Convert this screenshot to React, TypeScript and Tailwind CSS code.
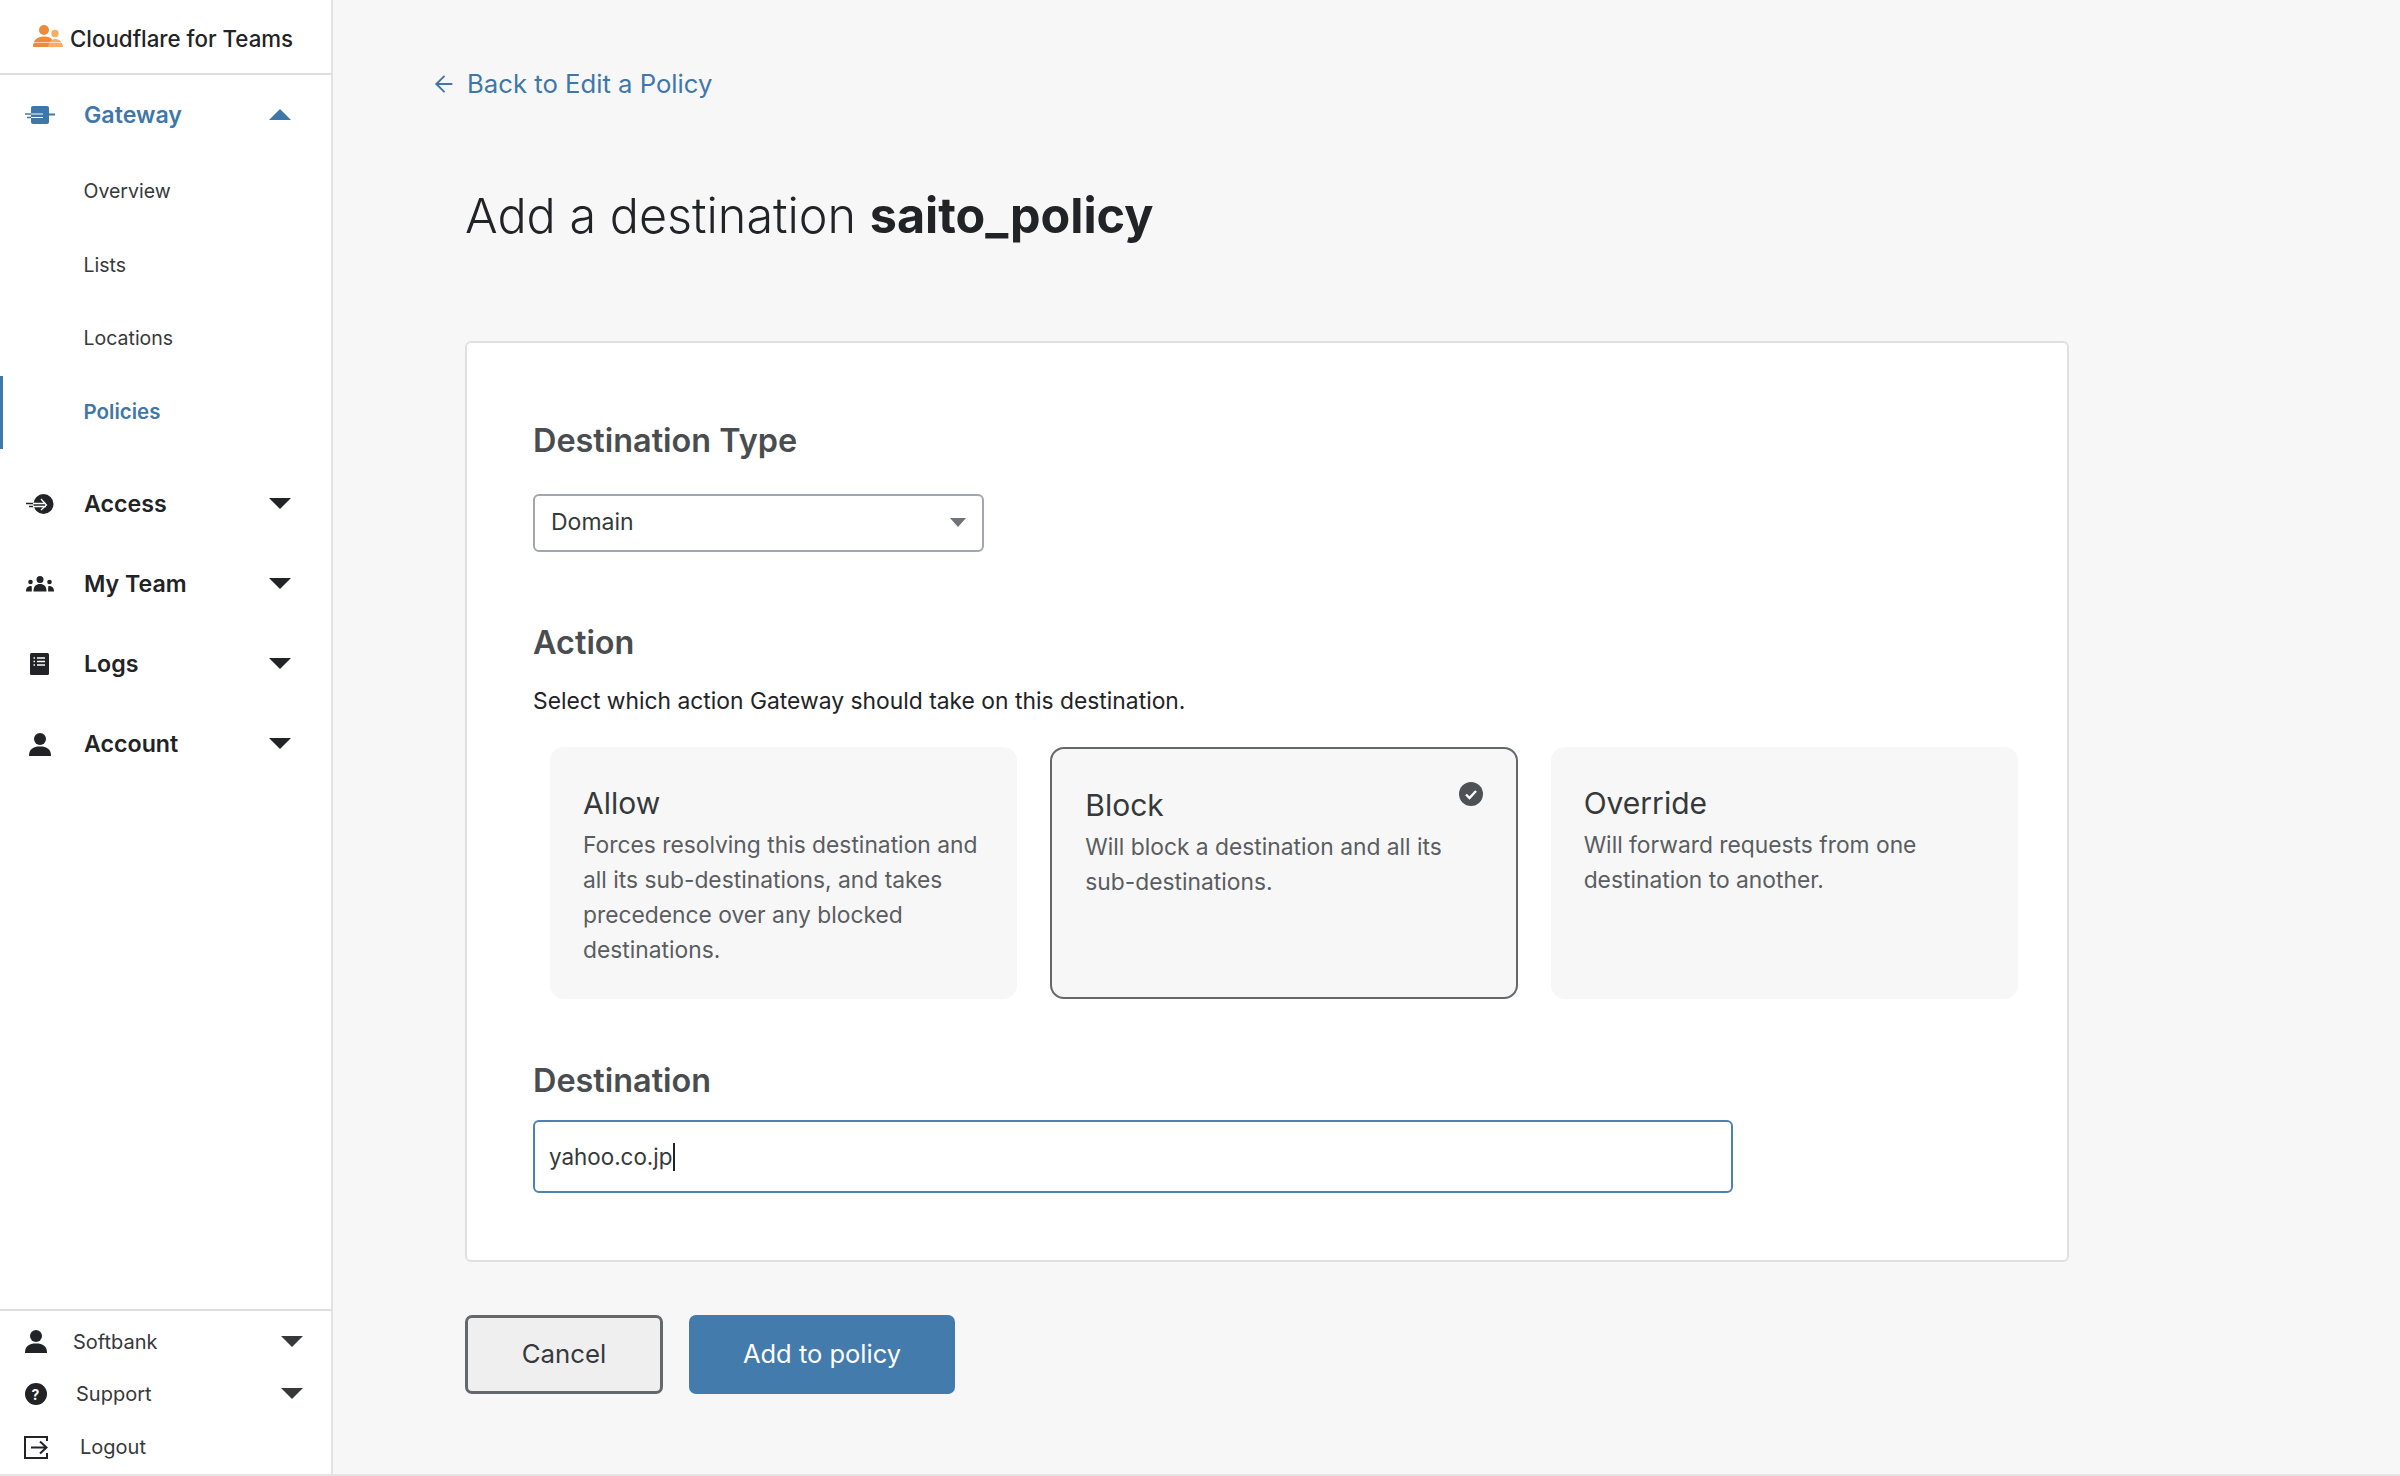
import { ArrowLeft } from 'lucide-react';
import type { ReactNode } from 'react';

function Caret({ up = false, className = '' }: { up?: boolean; className?: string }) {
  return (
    <svg width="22" height="12" viewBox="0 0 22 12" className={className}>
      <path d={up ? 'M0 11 L11 0 L22 11 Z' : 'M0 0 H22 L11 11 Z'} fill="currentColor" />
    </svg>
  );
}

function UserIcon({ className = '' }: { className?: string }) {
  return (
    <svg width="22" height="23" viewBox="0 0 22 23" className={className}>
      <circle cx="11" cy="6" r="6" fill="currentColor" />
      <path d="M0 23 C0 16 4 13.500 11 13.500 C18 13.500 22 16 22 23 Z" fill="currentColor" />
    </svg>
  );
}

function GatewayIcon() {
  return (
    <svg width="30" height="18" viewBox="0 0 30 18">
      <rect x="6" y="0" width="18" height="18" rx="2" fill="#3f77a8" />
      <path d="M24 8.500 H30" stroke="#3f77a8" strokeWidth="2" />
      <path d="M0 8 H17" stroke="#3f77a8" strokeWidth="1.500" />
      <path d="M6 8 H18 M6 11.500 H18" stroke="#fff" strokeWidth="1.200" />
      <path d="M2 11.500 H6" stroke="#3f77a8" strokeWidth="1.500" />
    </svg>
  );
}

function AccessIcon() {
  return (
    <svg width="28" height="20" viewBox="0 0 28 20">
      <circle cx="17.500" cy="10" r="10" fill="#222326" />
      <path d="M0 9.500 H8 M3 12.500 H8" stroke="#222326" strokeWidth="1.500" />
      <path d="M7 9.500 H20 M7 12.500 H20 M15 5 L20.500 11 L15 16" stroke="#fff" strokeWidth="1.300" fill="none" />
    </svg>
  );
}

function TeamIcon() {
  return (
    <svg width="28" height="16" viewBox="0 0 28 16" fill="#222326">
      <circle cx="14" cy="3.500" r="3.500" />
      <path d="M7.500 15.500 C7.500 10 10 8 14 8 C18 8 20.500 10 20.500 15.500 Z" />
      <circle cx="4.500" cy="6" r="2.300" />
      <path d="M0 15.500 C0 11.500 2 10 5.500 10 C6 11.500 5.800 13.500 5.800 15.500 Z" />
      <circle cx="23.500" cy="6" r="2.300" />
      <path d="M28 15.500 C28 11.500 26 10 22.500 10 C22 11.500 22.200 13.500 22.200 15.500 Z" />
    </svg>
  );
}

function LogsIcon() {
  return (
    <svg width="19" height="22" viewBox="0 0 19 22">
      <rect width="19" height="22" rx="1.500" fill="#222326" />
      <path d="M7 5 H15 M7 8.500 H15 M7 12 H15 M3.500 5 H5 M3.500 8.500 H5 M3.500 12 H5" stroke="#fff" strokeWidth="1.300" />
    </svg>
  );
}

function LogoIcon() {
  return (
    <svg width="30" height="23" viewBox="0 0 30 23" className="mr-[7px]">
      <circle cx="11" cy="5" r="5" fill="#ee8a3a" />
      <path d="M0 22 C0 15 4 11.500 11 11.500 C15 11.500 18 12.500 19.500 15 L19.500 22 Z" fill="#ee8a3a" />
      <circle cx="22" cy="8.500" r="3.700" fill="#f6ae62" />
      <path d="M15 22 C16 16.500 19 14 22.500 14 C26.500 14 29.500 17 30 22 Z" fill="#f6ae62" />
      <path d="M0 17.500 H30" stroke="#fff" strokeWidth="1" opacity="0.600" />
    </svg>
  );
}

function NavRow({ icon, label, open = false, active = false }: { icon: ReactNode; label: string; open?: boolean; active?: boolean }) {
  return (
    <div className={`flex h-[80px] items-center pr-[40px] ${active ? 'text-[#3f77a8]' : 'text-[#222326]'}`}>
      <div className="flex w-[84px] justify-center pr-[5px]">{icon}</div>
      <span className="text-[23.200px] font-semibold">{label}</span>
      <Caret up={open} className="ml-auto" />
    </div>
  );
}

function SubItem({ label, active = false }: { label: string; active?: boolean }) {
  return (
    <div
      className={`flex h-[73.500px] items-center ${
        active
          ? 'border-l-[3px] border-[#3f77a8] pl-[80.500px] text-[20.500px] font-semibold text-[#3f77a8]'
          : 'pl-[83.500px] text-[19.500px] text-[#36393a]'
      }`}
    >
      {label}
    </div>
  );
}

function FootRow({ icon, label, indent, caret = false }: { icon: ReactNode; label: string; indent: string; caret?: boolean }) {
  return (
    <div className="flex h-[52.500px] items-center pr-[28px] text-[20px] text-[#36393a]">
      <div className="flex w-[71px] justify-center">{icon}</div>
      <span className={indent}>{label}</span>
      {caret && <Caret className="ml-auto text-[#36393a]" />}
    </div>
  );
}

function ActionCard({ title, children, selected = false }: { title: string; children: ReactNode; selected?: boolean }) {
  return (
    <div
      className={`relative h-[252px] rounded-[14px] bg-[#f7f7f8] px-[33px] pt-[37px] ${
        selected ? 'border-2 border-[#65686b]' : ''
      }`}
    >
      {selected && (
        <svg width="24" height="24" viewBox="0 0 24 24" className="absolute right-[33px] top-[33px]">
          <circle cx="12" cy="12" r="12" fill="#4e5255" />
          <path d="M7 12.500 L10.500 16 L17 9" stroke="#fff" strokeWidth="2.400" fill="none" />
        </svg>
      )}
      <div className="text-[30px] leading-[38px] text-[#36393a]">{title}</div>
      <p className="mt-[5px] text-[22.800px] leading-[35px] text-[#595d60]">{children}</p>
    </div>
  );
}

export default function App() {
  return (
    <div className="flex h-[1476px] w-[2400px] overflow-hidden border-b-2 border-[#e4e4e5] bg-[#f7f7f8] font-['Inter',sans-serif]">
      {/* Sidebar */}
      <aside className="flex w-[333px] shrink-0 flex-col border-r-2 border-[#e2e2e3] bg-white">
        <div className="flex h-[75px] shrink-0 items-center border-b-2 border-[#dfdfe0] pl-[33px] text-[22.300px] font-medium text-[#222326]">
          <LogoIcon />
          <span className="mt-[5px]">Cloudflare for Teams</span>
        </div>
        <NavRow icon={<GatewayIcon />} label="Gateway" open active />
        <SubItem label="Overview" />
        <SubItem label="Lists" />
        <SubItem label="Locations" />
        <SubItem label="Policies" active />
        <div className="mt-[15px]">
          <NavRow icon={<AccessIcon />} label="Access" />
          <NavRow icon={<TeamIcon />} label="My Team" />
          <NavRow icon={<LogsIcon />} label="Logs" />
          <NavRow icon={<UserIcon className="text-[#222326]" />} label="Account" />
        </div>
        <div className="mt-auto flex h-[165px] flex-col justify-center border-t-2 border-[#dfdfe0] pt-[3px]">
          <FootRow icon={<UserIcon className="text-[#222326]" />} label="Softbank" indent="pl-[2px]" caret />
          <FootRow
            icon={
              <span className="flex h-[22px] w-[22px] items-center justify-center rounded-full bg-[#222326] text-[14px] font-bold text-white">?</span>
            }
            label="Support"
            indent="pl-[5px]"
            caret
          />
          <FootRow
            icon={
              <svg width="24" height="24" viewBox="0 0 24 24" fill="none" stroke="#222326" strokeWidth="2">
                <path d="M23 6 V2 H1 V23 H23 V18 M7 12.500 H22 M16 6.500 L22.500 12.500 L16 18.500" />
              </svg>
            }
            label="Logout"
            indent="pl-[9px]"
          />
        </div>
      </aside>

      {/* Main */}
      <main className="min-w-0 flex-1 pl-[132px]">
        <a className="ml-[-34px] mt-[65px] flex h-[38px] items-center text-[25.700px] text-[#3f77a8]">
          <ArrowLeft size={26} strokeWidth={1.800} className="mr-[10px]" />
          Back to Edit a Policy
        </a>
        <h1 className="mt-[75px] text-[48.500px] font-light leading-[76px] text-[#222326]">
          Add a destination <span className="font-bold">saito_policy</span>
        </h1>
        <section className="mt-[86.500px] h-[921px] w-[1604px] rounded-[6px] border-2 border-[#e0e0e1] bg-white px-[66px] pt-[76px]">
          <h2 className="text-[32.400px] font-semibold leading-[44px] text-[#4a4d4f]">Destination Type</h2>
          <div className="mt-[31px] flex h-[58px] w-[451px] items-center justify-between rounded-[6px] border-2 border-[#a3a6aa] pl-[16px] pr-[16px] text-[23px] text-[#36393a]">
            Domain
            <svg width="16" height="10" viewBox="0 0 16 10">
              <path d="M0 0 H16 L8 9 Z" fill="#6f7276" />
            </svg>
          </div>
          <h2 className="mt-[69px] text-[32.400px] font-semibold leading-[44px] text-[#4a4d4f]">Action</h2>
          <p className="mt-[19px] text-[22.850px] leading-[34px] text-[#222326]">Select which action Gateway should take on this destination.</p>
          <div className="ml-[17px] mt-[29px] grid w-[1468px] grid-cols-3 gap-x-[33px]">
            <ActionCard title="Allow">
              Forces resolving this destination and all its sub-destinations, and takes precedence over any blocked destinations.
            </ActionCard>
            <ActionCard title="Block" selected>
              Will block a destination and all its sub-destinations.
            </ActionCard>
            <ActionCard title="Override">Will forward requests from one destination to another.</ActionCard>
          </div>
          <h2 className="mt-[60px] text-[32.400px] font-semibold leading-[44px] text-[#4a4d4f]">Destination</h2>
          <div className="mt-[17px] flex h-[73px] w-[1200px] items-center rounded-[6px] border-2 border-[#4b82b2] bg-white pl-[14px] pt-[2px] text-[22.400px] text-[#36393a]">
            yahoo.co.jp
            <span className="ml-[1px] h-[28px] w-[1.500px] bg-[#222326]" />
          </div>
        </section>
        <div className="mt-[53px] flex gap-x-[26px]">
          <button className="h-[79px] w-[198px] rounded-[7px] border-[3px] border-[#65686b] bg-[#efeff0] text-[25.800px] text-[#36393a]">Cancel</button>
          <button className="h-[79px] w-[266px] rounded-[7px] bg-[#427bac] text-[25.500px] text-white">Add to policy</button>
        </div>
      </main>
    </div>
  );
}
